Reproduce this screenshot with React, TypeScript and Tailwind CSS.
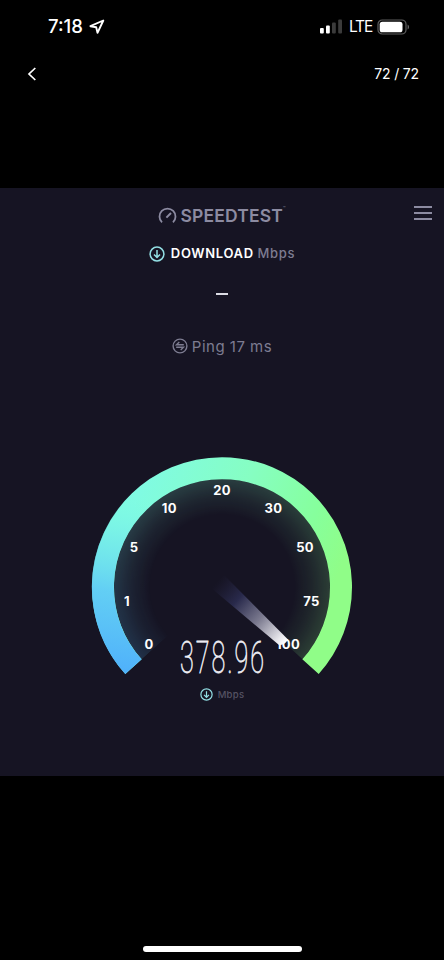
import React from 'react';

interface Tick {
  label: string;
  x: number;
  y: number;
}

const ticks: Tick[] = [
  { label: '0', x: 149, y: 649 },
  { label: '1', x: 127, y: 606 },
  { label: '5', x: 134, y: 552 },
  { label: '10', x: 169.3, y: 513 },
  { label: '20', x: 222, y: 495 },
  { label: '30', x: 273.5, y: 513 },
  { label: '50', x: 305, y: 552 },
  { label: '75', x: 311.5, y: 606 },
  { label: '100', x: 288, y: 649 },
];

const StatusBar: React.FC = () => (
  <div className="h-[52px] flex items-center justify-between pl-[48px] pr-[33px] pt-[2px]">
    <div className="flex items-center gap-[4px]">
      <span className="w-[37px] mb-[1px] text-[18.5px] leading-none font-medium">7:18</span>
      <svg width="16" height="16" viewBox="0 0 16 16" fill="none" stroke="white" strokeWidth="1.9" strokeLinejoin="round">
        <path d="M14.3 1.5 1.4 7.2 7.2 8.3 8.5 13.9Z" />
      </svg>
    </div>
    <div className="flex items-center">
      <svg width="24" height="16" viewBox="0 0 24 16">
        <rect x="1" y="9" width="3.8" height="5.5" rx="1" fill="white" />
        <rect x="7" y="6.5" width="3.8" height="8" rx="1" fill="white" />
        <rect x="13" y="3.5" width="3.8" height="11" rx="1" fill="#3b3b3b" />
        <rect x="19.2" y="0.5" width="3.8" height="14" rx="1" fill="#3b3b3b" />
      </svg>
      <span className="ml-[6px] mb-[1px] w-[24px] text-[15.5px] leading-none tracking-[-1.2px]">LTE</span>
      <svg className="ml-[4px] mr-[1px]" width="33" height="16" viewBox="0 0 33 16">
        <rect x="1" y="1" width="28" height="14" rx="4.3" fill="none" stroke="#5d5d5d" strokeWidth="1.2" />
        <rect x="2.7" y="2.7" width="22.8" height="10.6" rx="2.6" fill="white" />
        <path d="M30.6 5.5c1.8.8 1.8 4.2 0 5z" fill="#6d6d6d" />
      </svg>
    </div>
  </div>
);

const DownloadIcon: React.FC<{ size: number }> = ({ size }) => (
  <svg width={size} height={size} viewBox="0 0 16 16" fill="none" stroke="#93dfe4" strokeWidth="1.5">
    <circle cx="8" cy="8" r="6.9" />
    <path d="M8 4v7.4M5 8.5l3 3 3-3" />
  </svg>
);

const Header: React.FC = () => (
  <div className="h-[50px] grid grid-cols-[1fr_auto_1fr] items-center pt-[5px] text-[#8c8ba1]">
    <div />
    <div className="flex items-center gap-[4px]">
      <svg width="19" height="17" viewBox="0 0 19 17" fill="none" stroke="currentColor" strokeWidth="1.8">
        <path d="M4 15.4A8 8 0 1 1 15 15.4" />
        <path d="M8.4 10.6 13 6" strokeWidth="2" />
      </svg>
      <span className="w-[106px] pt-[1px] text-[17.5px] leading-none font-semibold tracking-[0.15px] whitespace-nowrap">
        SPEEDTEST<span className="align-top text-[4px]">™</span>
      </span>
    </div>
    <div className="flex flex-col gap-[4px] justify-self-end mr-[12px] mb-[5px]">
      <div className="w-[18px] h-[2px] bg-[#8c8ba1]" />
      <div className="w-[18px] h-[2px] bg-[#8c8ba1]" />
      <div className="w-[18px] h-[2px] bg-[#8c8ba1]" />
    </div>
  </div>
);

const Gauge: React.FC = () => (
  <svg className="block mx-auto" width="284" height="260" viewBox="80 450 284 260">
    <defs>
      <linearGradient id="arc" gradientUnits="userSpaceOnUse" x1="140" y1="490" x2="340" y2="570">
        <stop offset="0" stopColor="#80fbe2" />
        <stop offset="0.45" stopColor="#86fec2" />
        <stop offset="0.8" stopColor="#86ff9c" />
        <stop offset="1" stopColor="#90fd88" />
      </linearGradient>
      <linearGradient id="arcBlue" gradientUnits="userSpaceOnUse" x1="125" y1="674" x2="155" y2="500">
        <stop offset="0" stopColor="#4fb0fb" />
        <stop offset="0.45" stopColor="#60cbf6" stopOpacity="0.92" />
        <stop offset="0.75" stopColor="#6ee2ee" stopOpacity="0.5" />
        <stop offset="1" stopColor="#7cfbe8" stopOpacity="0" />
      </linearGradient>
      <radialGradient id="fade" gradientUnits="userSpaceOnUse" cx="222" cy="587" r="108">
        <stop offset="0.66" stopColor="white" stopOpacity="0" />
        <stop offset="0.84" stopColor="white" stopOpacity="0.08" />
        <stop offset="1" stopColor="white" stopOpacity="0.18" />
      </radialGradient>
      <linearGradient id="needle" gradientUnits="userSpaceOnUse" x1="217" y1="582" x2="285" y2="643">
        <stop offset="0" stopColor="#24233f" stopOpacity="0" />
        <stop offset="0.3" stopColor="#292a4c" />
        <stop offset="0.62" stopColor="#7b7a8f" />
        <stop offset="0.92" stopColor="#e8e7ec" />
        <stop offset="1" stopColor="#ffffff" />
      </linearGradient>
      <mask id="glow" maskUnits="userSpaceOnUse" x="80" y="450" width="284" height="260">
        <circle cx="222" cy="587" r="108" fill="url(#fade)" />
      </mask>
    </defs>

    {/* soft glow on the inside of the dial */}
    <g mask="url(#glow)" fill="none" strokeWidth="46">
      <path d="M156.6 645.5A88 88 0 1 1 287.4 645.5" stroke="url(#arc)" />
      <path d="M156.6 645.5A88 88 0 0 1 222 499" stroke="url(#arcBlue)" />
    </g>

    <g fill="none" strokeWidth="22">
      <path d="M133.5 666.7A119 119 0 1 1 310.5 666.7" stroke="url(#arc)" />
      <path d="M133.5 666.7A119 119 0 0 1 222 468" stroke="url(#arcBlue)" />
    </g>

    {ticks.map((tick) => (
      <text
        key={tick.label}
        x={tick.x}
        y={tick.y}
        textAnchor="middle"
        fill="white"
        className="text-[13px] font-bold tracking-[0.3px]"
      >
        {tick.label}
      </text>
    ))}

    <path d="M224 575 288 639.5Q285 645 279 645L210 587Z" fill="url(#needle)" />

    <text
      x="180"
      y="673"
      textLength="86"
      lengthAdjust="spacingAndGlyphs"
      fill="#ececf2"
      stroke="#ececf2"
      strokeWidth="0.8"
      className="font-['Roboto'] text-[45px] font-thin tracking-[3.5px]"
    >
      378.96
    </text>
  </svg>
);

const App: React.FC = () => (
  <div className="w-[444px] h-[960px] bg-black text-white font-['Inter',sans-serif] overflow-hidden flex flex-col">
    <StatusBar />
    <div className="h-[44px] flex items-center justify-between pl-[27px] pr-[25px]">
      <svg width="10" height="14" viewBox="0 0 10 14" fill="none" stroke="white" strokeWidth="1.7">
        <path d="M8.3 1 2 7l6.3 6" />
      </svg>
      <span className="text-[14px] leading-none tracking-[-0.15px]">72 / 72</span>
    </div>

    <div className="mt-[92px] h-[588px] bg-[#161423] flex flex-col">
      <Header />
      <div className="mt-[6px] h-[20px] flex items-center justify-center gap-[6px] text-[13px] tracking-[0.65px]">
        <DownloadIcon size={16} />
        <p className="font-semibold">
          DOWNLOAD <span className="font-medium text-[#7d7c91]">Mbps</span>
        </p>
      </div>
      <div className="mx-auto mt-[29px] w-[12px] h-[2px] bg-[#dcdce4]" />
      <div className="mt-[41px] h-[20px] flex items-center justify-center gap-[4px] text-[#7d7c91]">
        <svg width="16" height="16" viewBox="0 0 16 16" fill="none" stroke="currentColor" strokeWidth="1.4">
          <circle cx="8" cy="8" r="6.9" />
          <path d="M11.8 6.7H4.5L7.3 4M4.2 9.3h7.3L8.7 12" />
        </svg>
        <span className="text-[15px] leading-none tracking-[0.5px]">Ping 17 ms</span>
      </div>
      <div className="mt-[94px] h-[230px]">
        <Gauge />
      </div>
      <div className="mt-[8px] flex items-center justify-center gap-[5px] text-[#555363]">
        <DownloadIcon size={13} />
        <span className="text-[9.5px] leading-none font-medium tracking-[0.3px]">Mbps</span>
      </div>
    </div>

    <div className="mt-auto mb-[8px] mx-auto w-[159px] h-[6px] rounded-full bg-white" />
  </div>
);

export default App;
